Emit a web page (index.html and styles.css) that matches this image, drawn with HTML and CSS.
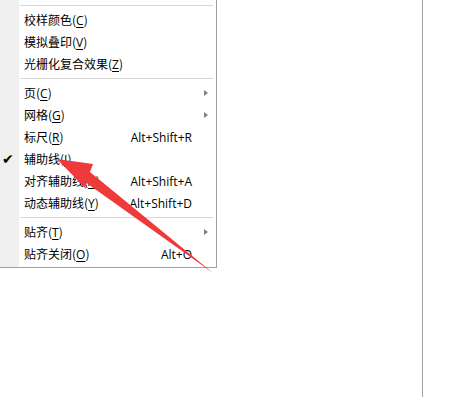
FILE: index.html
```html
<!DOCTYPE html>
<html>
<head>
<meta charset="utf-8">
<link rel="stylesheet" href="styles.css">
</head>
<body>
<div class="page">
  <div class="menu">
    <div class="sep first"></div>
    <div class="item"><span class="label">校样颜色(<u>C</u>)</span></div>
    <div class="item"><span class="label">模拟叠印(<u>V</u>)</span></div>
    <div class="item"><span class="label">光栅化复合效果(<u>Z</u>)</span></div>
    <div class="sep"></div>
    <div class="item"><span class="label">页(<u>C</u>)</span><span class="sub"></span></div>
    <div class="item"><span class="label">网格(<u>G</u>)</span><span class="sub"></span></div>
    <div class="item"><span class="label">标尺(<u>R</u>)</span><span class="key">Alt+Shift+R</span></div>
    <div class="item checked"><span class="check">✔</span><span class="label">辅助线(<u>I</u>)</span></div>
    <div class="item"><span class="label">对齐辅助线(<u>A</u>)</span><span class="key">Alt+Shift+A</span></div>
    <div class="item"><span class="label">动态辅助线(<u>Y</u>)</span><span class="key">Alt+Shift+D</span></div>
    <div class="sep"></div>
    <div class="item"><span class="label">贴齐(<u>T</u>)</span><span class="sub"></span></div>
    <div class="item"><span class="label">贴齐关闭(<u>O</u>)</span><span class="key">Alt+O</span></div>
  </div>
  <div class="canvas"></div>
</div>
<svg class="arrow" width="456" height="397" viewBox="0 0 456 397">
  <polygon points="57,159 93,164 90,172 213,273 85,182 86,189" fill="#ee3a3a"/>
</svg>
</body>
</html>
```
FILE: styles.css
```css
html, body {
  margin: 0;
  padding: 0;
  background: #ffffff;
}
body {
  width: 456px;
  height: 397px;
  overflow: hidden;
  position: relative;
  font-family: "Open Sans", "Noto Sans CJK SC", sans-serif;
  font-size: 12px;
  color: #000;
}
.page {
  display: flex;
  height: 397px;
}
.menu {
  width: 216px;
  height: 265px;
  border-right: 1px solid #a0a0a0;
  border-bottom: 1px solid #a0a0a0;
  padding-bottom: 2px;
  background: linear-gradient(to right, #f0f0f0 0, #f0f0f0 19px, #ffffff 19px);
  display: flex;
  flex-direction: column;
}
.canvas {
  width: 205px;
  border-right: 1px solid #a0a0a0;
}
.sep {
  height: 1px;
  background: #d7d7d7;
  margin: 3px 3px 3px 20px;
}
.sep.first {
  margin-top: 5px;
  margin-bottom: 3px;
}
.item {
  height: 22px;
  display: flex;
  align-items: center;
  position: relative;
  padding-left: 24px;
}
.label {
  font-family: "Noto Sans CJK SC", sans-serif;
  white-space: nowrap;
}
.label u {
  font-family: "Open Sans", sans-serif;
  text-underline-offset: 2px;
}
.key {
  font-family: "Open Sans", sans-serif;
  white-space: nowrap;
  margin-left: auto;
  margin-right: 24px;
}
.sub {
  margin-left: auto;
  margin-right: 8px;
  width: 0;
  height: 0;
  border-top: 3px solid transparent;
  border-bottom: 3px solid transparent;
  border-left: 4px solid #808080;
}
.check {
  position: absolute;
  left: 2px;
  top: 3px;
  font-size: 14px;
  font-family: "DejaVu Sans", sans-serif;
}
.arrow {
  position: absolute;
  left: 0;
  top: 0;
}
```
